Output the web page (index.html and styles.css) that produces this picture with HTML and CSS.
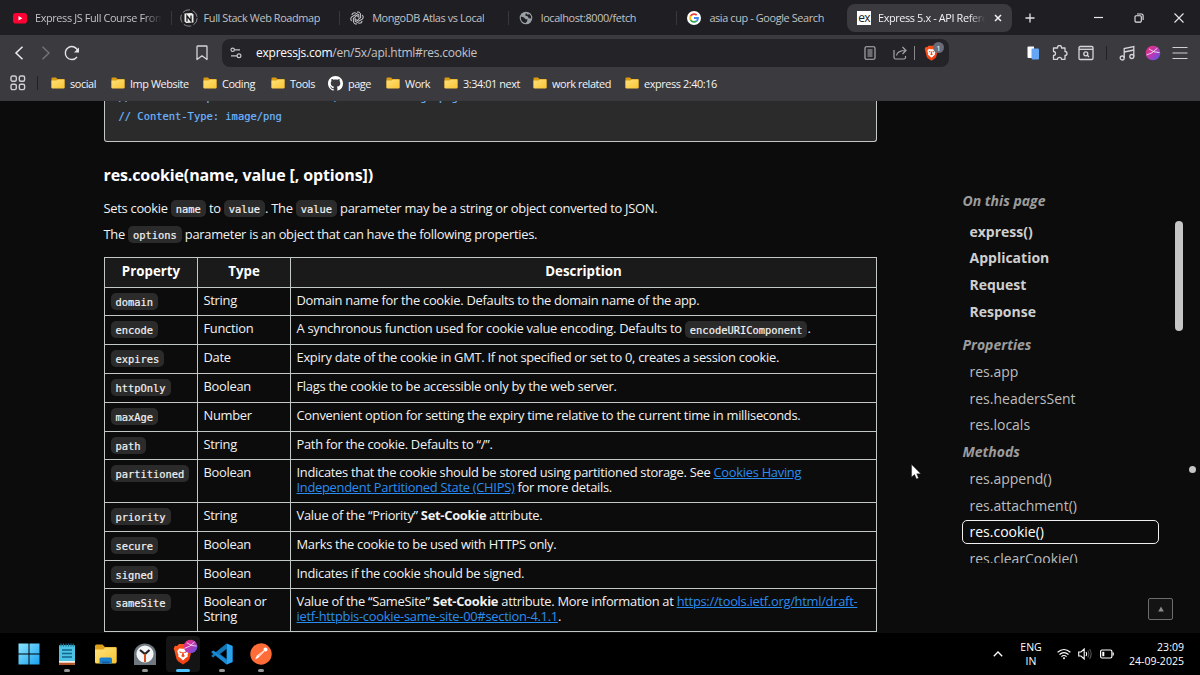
FILE: index.html
```html
<!DOCTYPE html>
<html lang="en">
<head>
<meta charset="utf-8">
<title>Express 5.x - API Reference</title>
<link rel="stylesheet" href="styles.css">
</head>
<body>
<svg width="0" height="0" class="defs">
  <defs>
    <linearGradient id="fold" x1="0" y1="0" x2="1" y2="1"><stop offset="0" stop-color="#ffe27a"/><stop offset="1" stop-color="#f8c434"/></linearGradient>
    <linearGradient id="orb" x1="0" y1="0" x2="1" y2="1"><stop offset="0.2" stop-color="#e0308a"/><stop offset="0.55" stop-color="#b43ab8"/><stop offset="1" stop-color="#4a5cf0"/></linearGradient>
    <linearGradient id="win" x1="0" y1="0" x2="1" y2="1"><stop offset="0" stop-color="#8ae6ff"/><stop offset="1" stop-color="#1aa0f0"/></linearGradient>
    <linearGradient id="lion" x1="0" y1="0" x2="1" y2="1"><stop offset="0" stop-color="#ff5a1f"/><stop offset="1" stop-color="#f03a10"/></linearGradient>
    <symbol id="folder" viewBox="0 0 14 12"><path d="M.5 1.5Q.5.5 1.5.5H5L6.500 2H13Q13.500 2 13.500 2.500V11H.5Z" fill="#d99a14"/><path d="M.5 3.500H5.500L7 2.500H13.500V10.500Q13.500 11.500 12.500 11.500H1.500Q.5 11.500.5 10.500Z" fill="url(#fold)"/></symbol>
    <symbol id="brave" viewBox="0 0 20 22"><path d="M6 1H14L16 3L18 2.800L19.300 5.500L18.500 8L16.500 16Q16 18 10 21.500Q4 18 3.500 16L1.500 8L.7 5.500L2 2.800L4 3Z" fill="url(#lion)"/><path d="M6.500 5.300L8.500 5.700H11.500L13.500 5.300L15.800 8L14.500 12L14.800 13.500L12.300 15.300L10 17.500L7.700 15.300L5.200 13.500L5.500 12L4.200 8Z" fill="#fff"/><path d="M6.300 8.200L9 9L8.500 10L6.800 9.800ZM13.700 8.200L11 9L11.500 10L13.200 9.800ZM9.400 9H10.600L11 12L12 13L10 14.200L8 13L9 12Z" fill="#f4481a"/></symbol>
    <symbol id="orbit" viewBox="0 0 16 16"><circle cx="8" cy="8" r="7.300" fill="url(#orb)"/><path d="M1.500 10Q7 9 12.500 3M4 4Q9 8 14.500 7.500" fill="none" stroke="#fff" stroke-opacity=".85" stroke-width=".9"/></symbol>
  </defs>
</svg>

<header class="tabs">
  <div class="tab">
    <svg class="fav" viewBox="0 0 14 14"><rect x="0" y="2" width="14" height="10.500" rx="2.800" fill="#ff0033"/><path d="M5.500 5V9.500L9.300 7.250Z" fill="#fff"/></svg>
    <span class="title fade">Express JS Full Course From</span>
  </div>
  <div class="tab">
    <svg class="fav wide" viewBox="0 0 18 18"><circle cx="9" cy="9" r="8.200" fill="none" stroke="#8a8a8e" stroke-width="1" stroke-dasharray="8 2.500"/><path d="M4.500 4.500L11.500 4L13.500 5.300V13.500L6.200 14L4.500 12.500Z" fill="#eee"/><path d="M7 12.500V6.800L11 12V6.500" fill="none" stroke="#111" stroke-width="1.300"/></svg>
    <span class="title">Full Stack Web Roadmap</span>
  </div>
  <div class="tab">
    <svg class="fav" viewBox="0 0 14 14" fill="none" stroke="#c9c9cb" stroke-width="1"><path d="M7 1Q9.800.3 10.600 3V7L7.500 9"/><path d="M7 1Q9.800.3 10.600 3V7L7.500 9" transform="rotate(60 7 7)"/><path d="M7 1Q9.800.3 10.600 3V7L7.500 9" transform="rotate(120 7 7)"/><path d="M7 1Q9.800.3 10.600 3V7L7.500 9" transform="rotate(180 7 7)"/><path d="M7 1Q9.800.3 10.600 3V7L7.500 9" transform="rotate(240 7 7)"/><path d="M7 1Q9.800.3 10.600 3V7L7.500 9" transform="rotate(300 7 7)"/></svg>
    <span class="title">MongoDB Atlas vs Local</span>
  </div>
  <div class="tab">
    <svg class="fav" viewBox="0 0 14 14"><circle cx="7" cy="7" r="6.300" fill="#9aa0a6"/><path d="M2 5.500L5 6.500L6.500 8.200H8.500L8 10.500L6.500 12Q2.200 11.500 1.800 7ZM7 2L6.200 4.500L8.500 5.200L9.800 7.200L12.300 7.500Q12.300 4.500 10 2.800L9 4Z" fill="#1f1f23"/></svg>
    <span class="title">localhost:8000/fetch</span>
  </div>
  <div class="tab">
    <svg class="fav" viewBox="0 0 14 14"><circle cx="7" cy="7" r="7" fill="#fff"/><g fill="none" stroke-width="1.800"><path d="M3.600 5A4 4 0 0 1 9.800 4.200" stroke="#ea4335"/><path d="M3.600 5A4 4 0 0 0 3.600 9" stroke="#fbbc05"/><path d="M3.600 9A4 4 0 0 0 9.600 10" stroke="#34a853"/><path d="M9.600 10A4 4 0 0 0 11 7H7" stroke="#4285f4"/></g></svg>
    <span class="title">asia cup - Google Search</span>
  </div>
  <div class="tab active">
    <span class="ex">ex</span>
    <span class="title fade">Express 5.x - API Refere</span>
    <svg class="close" viewBox="0 0 8 8"><path d="M1 1L7 7M7 1L1 7" stroke="#f2f2f4" stroke-width="1.500"/></svg>
  </div>
  <svg class="plus" viewBox="0 0 10 10"><path d="M5 .5V9.500M.5 5H9.500" stroke="#e4e4e6" stroke-width="1.300"/></svg>
  <svg class="wmin" viewBox="0 0 10 10"><path d="M0 4.500H9" stroke="#e8e8ea" stroke-width="1.200"/></svg>
  <svg class="wmax" viewBox="0 0 10 10" fill="none" stroke="#e8e8ea" stroke-width="1.100"><rect x="1" y="2.800" width="6.300" height="6.300" rx="1"/><path d="M3 1H7.500Q9.100 1 9.100 2.500V7"/></svg>
  <svg class="wclose" viewBox="0 0 10 10"><path d="M.5.5L9.500 9.500M9.500.5L.5 9.500" stroke="#e8e8ea" stroke-width="1.100"/></svg>
</header>

<nav class="toolbar">
  <svg class="tb m11" viewBox="0 0 16 16" fill="none" stroke="#eeeef0" stroke-width="1.500"><path d="M11.500 1.800L5 8L11.500 14.200"/></svg>
  <svg class="tb m10" viewBox="0 0 16 16" fill="none" stroke="#77777c" stroke-width="1.300"><path d="M5.500 1.800L12 8L5.500 14.200"/></svg>
  <svg class="tb m11" viewBox="0 0 16 16" fill="none" stroke="#e4e4e6" stroke-width="1.400"><path d="M13 12A6.500 6.500 0 1 1 14 6"/><path d="M15 2.500V7.500H10Z" fill="#e4e4e6" stroke="none"/></svg>
  <svg class="tb m114" viewBox="0 0 16 16" fill="none" stroke="#d6d6d9" stroke-width="1.300"><path d="M3 1.700Q3 1 3.700 1H12.300Q13 1 13 1.700V14.500L8 10.800L3 14.500Z" stroke-linejoin="round"/></svg>
  <div class="address">
    <svg class="tune" viewBox="0 0 12 12" fill="none" stroke="#c6c6ca" stroke-width="1.200"><circle cx="2.700" cy="2.800" r="1.700"/><path d="M4.500 2.800H10M1 8.800H7"/><circle cx="9" cy="8.800" r="1.900"/></svg>
    <span class="url"><b>expressjs.com</b>/en/5x/api.html#res.cookie</span>
    <svg class="reader" viewBox="0 0 12 14" fill="none" stroke="#b5b5b9" stroke-width="1.100"><rect x="1" y=".8" width="10" height="12.400" rx="1.200"/><path d="M3.500 4H8.500M3.500 6H8.500M3.500 8H8.500M3.500 10H8.500"/></svg>
    <svg class="share" viewBox="0 0 14 14" fill="none" stroke="#a4a4a9" stroke-width="1.200"><path d="M1 4V11.500Q1 13 2.500 13H11Q12.500 13 12.500 11.500V10M3.500 9.500Q4.500 4.500 12.500 4.500M9.500 1L13 4.500L9.500 8"/></svg>
    <i class="bar"></i>
    <span class="shield"><svg viewBox="0 0 20 22"><use href="#brave"/></svg><span class="badge">1</span></span>
  </div>
  <svg class="tb m76" viewBox="0 0 16 16"><path d="M2.500 2.500Q2.500 1.500 3.500 1.500H9V13H3.500Q2.500 13 2.500 12Z" fill="#fff"/><rect x="6.500" y="3.500" width="7.500" height="11" rx="1" fill="#66a6f7"/></svg>
  <svg class="tb m11" viewBox="0 0 16 16" fill="none" stroke="#d6d6d9" stroke-width="1.300"><path d="M1.500 3H5.500V2.500A2 2 0 0 1 9.500 2.500V3H13V6.500A2 2 0 0 1 13 10.500V14.300H9.500A2 2 0 0 0 5.500 14.300H1.500V10.500A2 2 0 0 0 1.500 6.500Z" stroke-linejoin="round"/></svg>
  <svg class="tb m10" viewBox="0 0 16 16" fill="none" stroke="#d6d6d9" stroke-width="1.300"><rect x="1" y="1.500" width="14" height="13" rx="1.200"/><path d="M1 4.300H15"/><circle cx="7.800" cy="8.800" r="2"/><path d="M9.300 10.300L11 12"/></svg>
  <i class="tsep"></i>
  <svg class="tb m12" viewBox="0 0 16 16" fill="none" stroke="#d6d6d9" stroke-width="1.300"><circle cx="3.200" cy="13" r="2"/><circle cx="12.800" cy="11.500" r="2"/><path d="M5.200 13V3.500L14.800 1.500V11.500M5.200 7L14.800 5"/></svg>
  <svg class="tb m10" viewBox="0 0 16 16"><use href="#orbit"/></svg>
  <svg class="tb m11" viewBox="0 0 16 16" fill="none" stroke="#d0d0d4" stroke-width="1.200"><path d="M.5 2.500H15.500M.5 8H15.500M.5 13.500H15.500"/></svg>
</nav>

<nav class="bookmarks">
  <svg class="apps" viewBox="0 0 16 16" fill="none" stroke="#d0d0d4" stroke-width="1.400"><rect x="1" y="1" width="5.300" height="5.300" rx="1.500"/><rect x="9.300" y="1" width="5.300" height="5.300" rx="1.500"/><rect x="1" y="9.300" width="5.300" height="5.300" rx="1.500"/><rect x="9.300" y="9.300" width="5.300" height="5.300" rx="1.500"/></svg>
  <i class="bsep"></i>
  <ul>
    <li><svg viewBox="0 0 14 12"><use href="#folder"/></svg>social</li>
    <li><svg viewBox="0 0 14 12"><use href="#folder"/></svg>Imp Website</li>
    <li><svg viewBox="0 0 14 12"><use href="#folder"/></svg>Coding</li>
    <li><svg viewBox="0 0 14 12"><use href="#folder"/></svg>Tools</li>
    <li><svg class="gh" viewBox="0 0 16 16"><path fill="#fff" d="M8 0C3.580 0 0 3.580 0 8c0 3.540 2.290 6.530 5.470 7.590.4.070.55-.17.55-.38 0-.19-.01-.82-.01-1.490-2.010.37-2.530-.49-2.690-.94-.09-.23-.48-.94-.82-1.130-.28-.15-.68-.52-.01-.53.63-.01 1.080.58 1.230.82.72 1.210 1.870.87 2.330.66.07-.52.28-.87.51-1.070-1.780-.2-3.640-.89-3.640-3.950 0-.87.31-1.590.82-2.150-.08-.2-.36-1.020.08-2.120 0 0 .67-.21 2.200.82.64-.18 1.320-.27 2-.27s1.360.09 2 .27c1.530-1.040 2.200-.82 2.200-.82.44 1.100.16 1.920.08 2.120.51.56.82 1.270.82 2.150 0 3.070-1.870 3.750-3.650 3.950.29.25.54.73.54 1.480 0 1.070-.01 1.930-.01 2.200 0 .21.15.46.55.38A8.010 8.010 0 0 0 16 8c0-4.420-3.580-8-8-8Z"/></svg>page</li>
    <li><svg viewBox="0 0 14 12"><use href="#folder"/></svg>Work</li>
    <li><svg viewBox="0 0 14 12"><use href="#folder"/></svg>3:34:01 next</li>
    <li><svg viewBox="0 0 14 12"><use href="#folder"/></svg>work related</li>
    <li><svg viewBox="0 0 14 12"><use href="#folder"/></svg>express 2:40:16</li>
  </ul>
</nav>

<main>
  <article>
    <div class="pre-wrap"><pre>// Content-Disposition: attachment; filename="logo.png"
// Content-Type: image/png</pre></div>
    <h3>res.cookie(name, value [, options])</h3>
    <p>Sets cookie <code>name</code> to <code>value</code>. The <code>value</code> parameter may be a string or object converted to JSON.</p>
    <p>The <code>options</code> parameter is an object that can have the following properties.</p>
    <table>
      <colgroup><col class="c1"><col class="c1"><col></colgroup>
      <tr class="h30"><th>Property</th><th>Type</th><th>Description</th></tr>
      <tr class="h28"><td><code>domain</code></td><td>String</td><td>Domain name for the cookie. Defaults to the domain name of the app.</td></tr>
      <tr><td><code>encode</code></td><td>Function</td><td>A synchronous function used for cookie value encoding. Defaults to <code>encodeURIComponent</code>.</td></tr>
      <tr><td><code>expires</code></td><td>Date</td><td>Expiry date of the cookie in GMT. If not specified or set to 0, creates a session cookie.</td></tr>
      <tr><td><code>httpOnly</code></td><td>Boolean</td><td>Flags the cookie to be accessible only by the web server.</td></tr>
      <tr><td><code>maxAge</code></td><td>Number</td><td>Convenient option for setting the expiry time relative to the current time in milliseconds.</td></tr>
      <tr class="h28"><td><code>path</code></td><td>String</td><td>Path for the cookie. Defaults to “/”.</td></tr>
      <tr class="h43"><td><code>partitioned</code></td><td>Boolean</td><td>Indicates that the cookie should be stored using partitioned storage. See <a>Cookies Having<br>Independent Partitioned State (CHIPS)</a> for more details.</td></tr>
      <tr><td><code>priority</code></td><td>String</td><td>Value of the “Priority” <b>Set-Cookie</b> attribute.</td></tr>
      <tr><td><code>secure</code></td><td>Boolean</td><td>Marks the cookie to be used with HTTPS only.</td></tr>
      <tr class="h28"><td><code>signed</code></td><td>Boolean</td><td>Indicates if the cookie should be signed.</td></tr>
      <tr class="h43"><td><code>sameSite</code></td><td>Boolean or<br>String</td><td>Value of the “SameSite” <b>Set-Cookie</b> attribute. More information at <a>https://tools.ietf.org/html/draft-<br>ietf-httpbis-cookie-same-site-00#section-4.1.1</a>.</td></tr>
    </table>
  </article>

  <aside>
    <div class="toc">
      <h4 class="first">On this page</h4>
      <a class="top">express()</a>
      <a class="top">Application</a>
      <a class="top">Request</a>
      <a class="top">Response</a>
      <h4 class="props">Properties</h4>
      <a>res.app</a>
      <a>res.headersSent</a>
      <a>res.locals</a>
      <h4>Methods</h4>
      <a>res.append()</a>
      <a>res.attachment()</a>
      <a class="current">res.cookie()</a>
      <a>res.clearCookie()</a>
    </div>
    <div class="totop"><svg viewBox="0 0 6 6"><path d="M3 .5L5.800 5.500H.2Z" fill="#8c8c8c"/></svg></div>
  </aside>
  <i class="thumb"></i>
  <i class="dot"></i>
  <svg class="cursor" viewBox="0 0 10 16"><path d="M.6.600V13L3.500 10.500L5.500 15L7.500 14L5.700 9.800H9.700Z" fill="#fff" stroke="#222" stroke-width=".4"/></svg>
</main>

<footer>
  <div class="pinned">
    <span class="app"><svg viewBox="0 0 22 22"><path d="M.5.5H10.500V10.500H.5ZM11.500.5H21.500V10.500H11.500ZM.5 11.500H10.500V21.500H.5ZM11.500 11.500H21.500V21.500H11.500Z" fill="url(#win)"/></svg></span>
    <span class="app run"><svg viewBox="0 0 22 22"><rect x="3" y="2" width="16" height="19" rx="1" fill="#4cc3e4"/><path d="M3 18H19V20.500Q19 22 17.500 22H4.500Q3 22 3 20.500Z" fill="#f4f0ea"/><path d="M3 19.700H19V20.500Q19 22 17.500 22H4.500Q3 22 3 20.500Z" fill="#b5562a"/><path d="M5 .5V3.500M7.500.5V3.500M10 .5V3.500M12.500.5V3.500M15 .5V3.500M17.300.5V3.500" stroke="#176f93" stroke-width="1.200"/><path d="M6 7H16M6 10.500H16M6 14H16" stroke="#11658a" stroke-width="1.300"/></svg></span>
    <span class="app"><svg viewBox="0 0 22 22"><path d="M0 3Q0 1.500 1.500 1.500H7.500L10 4H20.500Q21.500 4 21.500 5V19H0Z" fill="#dda11c"/><path d="M0 6.500H8L10.500 4.500H21.500V19Q21.500 20.500 20 20.500H1.500Q0 20.500 0 19Z" fill="url(#fold)"/><path d="M4.500 20.500V16Q4.500 14.500 6 14.500H15.500Q17 14.500 17 16V20.500Z" fill="#1b7fcf"/><path d="M7 20.500V18.500H14.500V20.500Z" fill="#0f5ea6"/></svg></span>
    <span class="app run"><svg viewBox="0 0 22 22"><path d="M0 22V11A11 10.500 0 0 1 22 11V22Z" fill="#6f7880"/><circle cx="11" cy="11" r="8.600" fill="#f2f4f5"/><path d="M6 7L11 11L15.500 7" fill="none" stroke="#222" stroke-width="2.200"/><path d="M11 11V19" stroke="#d5531d" stroke-width="2"/></svg></span>
    <span class="app run on"><svg viewBox="0 0 20 22"><use href="#brave"/></svg><svg class="mini" viewBox="0 0 16 16"><use href="#orbit"/></svg></span>
    <span class="app run"><svg viewBox="0 0 22 22"><path d="M15.500.5L21.500 3V19L15.500 21.500L5 11.500L2.500 14.500L.5 13.500V12.500L15.500.5Z" fill="#1177bb"/><path d="M.5 8.500L2.500 7.500L16.500 18V21.500L15 21L.5 9.500Z" fill="#1b8ad6"/><path d="M15.500 6V16L9 11Z" fill="#000"/><path d="M16 .7L21.500 3V19L16 21.300Z" fill="#28a3ee"/></svg></span>
    <span class="app run"><svg viewBox="0 0 22 22"><circle cx="11" cy="11" r="10.700" fill="#ff6c37"/><path d="M5 16.500L7 12.500L13.500 7.500L14.500 8.500L8 15Z" fill="#fff"/><circle cx="15.500" cy="6.500" r="2" fill="#fff"/><path d="M8.500 13L13 8.500" stroke="#ff6c37" stroke-width=".6"/></svg></span>
  </div>
  <svg class="chev" viewBox="0 0 10 6"><path d="M.8 5.200L5 1L9.200 5.200" fill="none" stroke="#fff" stroke-width="1.300"/></svg>
  <div class="lang">ENG<br>IN</div>
  <svg class="wifi" viewBox="0 0 14 12" fill="none" stroke="#fff" stroke-width="1.200"><path d="M.6 4.300Q7-1.300 13.400 4.300M2.500 6.500Q7 2.600 11.500 6.500M4.400 8.600Q7 6.400 9.600 8.600"/><circle cx="7" cy="10.300" r="1" fill="#fff" stroke="none"/></svg>
  <svg class="vol" viewBox="0 0 14 12" fill="none" stroke="#fff" stroke-width="1.100"><path d="M.7 4H3L6.200 1V11L3 8H.7ZM8 4Q9.300 6 8 8"/><path d="M9.800 2.500Q12 6 9.800 9.500M11.600 1Q14.700 6 11.600 11" stroke="#555"/></svg>
  <svg class="bat" viewBox="0 0 14 10" fill="none" stroke="#fff" stroke-width="1.200"><rect x=".6" y="1" width="11.300" height="8" rx="1.500"/><path d="M13.200 3.500V6.500"/><rect x="2.300" y="2.800" width="2" height="4.400" fill="#fff" stroke="none"/></svg>
  <div class="clock">23:09<br>24-09-2025</div>
</footer>
</body>
</html>
```
FILE: styles.css
```css
* { box-sizing: border-box; }
body {
  margin: 0;
  width: 1200px;
  height: 675px;
  overflow: hidden;
  display: flex;
  flex-direction: column;
  background: #0c0c0c;
  color: #f2f2f2;
  font-family: "Open Sans", sans-serif;
}
svg { display: block; flex: none; }
.defs { position: absolute; }

/* tab strip */
.tabs { height: 35px; flex: none; display: flex; align-items: center; background: #1f1f23; padding-left: 3px; }
.tab {
  width: 168.6px; height: 28px; flex: none; display: flex; align-items: center; padding-left: 10px;
  font-size: 10.900px; letter-spacing: -0.38px; color: #c2c2c5; white-space: nowrap; position: relative;
}
.tab + .tab:not(.active)::before { content: ""; position: absolute; left: -1px; top: 7px; width: 1px; height: 14px; background: #39393d; }
.fav { width: 14px; height: 14px; margin-right: 8px; }
.fav.wide { width: 18px; height: 18px; margin: 0 6px 0 -2px; }
.title { overflow: hidden; position: relative; top: -0.5px; }
.fade { width: 127px; -webkit-mask-image: linear-gradient(90deg, #000 85%, transparent); mask-image: linear-gradient(90deg, #000 85%, transparent); }
.tab.active { width: 165px; margin-left: 1px; background: #3b3b3f; border-radius: 8px; color: #f2f2f4; }
.tab.active .fade { width: 107px; }
.ex { width: 14px; height: 14px; margin-right: 7px; background: #fff; color: #222; font-size: 12px; line-height: 13px; letter-spacing: -0.8px; text-align: center; }
.close { width: 8px; height: 8px; margin-left: 9px; }
.plus { width: 10px; height: 10px; margin-left: 13px; }
.wmin { width: 10px; height: 10px; margin-left: 59px; }
.wmax { width: 10px; height: 10px; margin-left: 30px; }
.wclose { width: 10px; height: 10px; margin-left: 30px; }

/* toolbar */
.toolbar { height: 35px; flex: none; display: flex; align-items: center; background: #3b3b3f; }
.tb { width: 16px; height: 16px; }
.m10 { margin-left: 10px; }
.m11 { margin-left: 11px; }
.m12 { margin-left: 12px; }
.m76 { margin-left: 76px; }
.m114 { margin-left: 114px; }
.address { width: 727px; height: 28px; margin-left: 12px; border-radius: 8px; background: #242428; display: flex; align-items: center; padding-left: 8px; }
.tune { width: 12px; height: 12px; }
.url { margin-left: 14px; font-size: 12px; letter-spacing: -0.24px; color: #c3c3c8; flex: 1; }
.url b { font-weight: 400; color: #fff; }
.reader { width: 12px; height: 14px; margin-right: 17px; }
.share { width: 14px; height: 14px; margin-right: 7px; }
.bar { width: 1px; height: 14px; background: #88888c; margin-right: 9px; }
.shield { position: relative; width: 25px; height: 16px; }
.shield svg { width: 15px; height: 16px; }
.badge { position: absolute; left: 9px; top: -3px; width: 11px; height: 11px; border-radius: 50%; background: #696b78; color: #fff; font-size: 8px; line-height: 11px; text-align: center; }
.tsep { width: 1px; height: 14px; margin: 0 0 0 12px; background: #222226; }

/* bookmarks bar */
.bookmarks { height: 30px; flex: none; display: flex; align-items: center; background: #3b3b3f; padding: 0 0 4px 10px; }
.apps { width: 16px; height: 16px; }
.bsep { width: 1px; height: 14px; background: #222226; margin: 0 13px 0 11px; }
.bookmarks ul { list-style: none; margin: 0; padding: 0; display: grid; grid-template-columns: 60px 92px 68px 57px 58px 58px 89px 92px 100px; font-size: 10.900px; letter-spacing: -0.42px; font-weight: 500; white-space: nowrap; color: #f4f4f6; }
.bookmarks li { display: flex; align-items: center; gap: 5px; }
.bookmarks li svg { width: 14px; height: 12px; }
.bookmarks li svg.gh { width: 15px; height: 15px; }

/* page */
main { flex: 1; min-height: 0; display: flex; position: relative; overflow: hidden; border-top: 1px solid #39393d; }
article { width: 773px; margin-left: 104px; flex: none; }
.pre-wrap { height: 41px; border: 1px solid #c2c8c8; border-top: 0; border-radius: 0 0 3px 3px; background: #2b2b2b; overflow: hidden; }
pre { margin: -13px 0 0 13.500px; font: 10.45px/18.5px "DejaVu Sans Mono", monospace; color: #6cb6ff; -webkit-text-stroke: 0.2px #6cb6ff; }
h3 { margin: 21px 0 0; font-size: 16px; letter-spacing: -0.12px; line-height: 24px; font-weight: 700; color: #fff; }
h3, p { text-indent: -0.5px; }
p { margin: 0; font-size: 12.900px; letter-spacing: -0.28px; line-height: 26px; white-space: nowrap; }
h3 + p { margin-top: 8px; }
code { display: inline-block; height: 17px; padding: 0 5px; border-radius: 5px; background: #2b2b2b; font: 10.4px/18px "DejaVu Sans Mono", monospace; letter-spacing: 0; text-indent: 0; -webkit-text-stroke: 0.2px #f2f2f2; }
table { width: 773px; margin-top: 10px; table-layout: fixed; border-collapse: collapse; font-size: 12.900px; letter-spacing: -0.28px; line-height: 15px; }
.c1 { width: 93px; }
tr { height: 29px; }
.h28 { height: 28px; }
.h30 { height: 30px; }
.h43 { height: 43px; }
th, td { border: 1px solid #c2c8c8; padding: 0 5.500px; white-space: nowrap; }
th { background: #1a1a1a; color: #fff; text-align: center; font-size: 13.300px; letter-spacing: 0; padding-bottom: 2px; }
td { vertical-align: top; padding-top: 5px; text-align: left; }
td code { margin: -1px 0; position: relative; top: 0.5px; }
a { color: #2a8cf0; text-decoration: underline; }

/* table of contents */
aside { width: 200px; margin-left: 85px; }
.toc { height: 462px; padding-top: 86px; overflow: hidden; font-size: 14px; }
.toc h4, .toc a { display: flex; align-items: center; height: 26.750px; margin: 0; }
.toc h4 { padding-left: 0.5px; font-size: 14px; font-style: italic; color: #9c9c9c; }
.toc .first { margin-bottom: 4px; }
.toc .props { margin-top: 6.500px; }
.toc a { padding-left: 7.500px; color: #bdbdbd; text-decoration: none; }
.toc .top { font-weight: 700; color: #cfcfcf; }
.toc .current { height: 24px; width: 197px; margin: 1px 0 1.750px; padding-left: 6.500px; border: 1px solid #f0f0f0; border-radius: 5px; color: #fff; }
.totop { width: 25px; height: 22px; margin: 35px 0 0 186px; border: 1px solid #6c6c6c; border-radius: 2px; background: #141414; display: flex; align-items: center; justify-content: center; }
.totop svg { width: 6px; height: 6px; }
.thumb { position: absolute; left: 1175px; top: 120px; width: 8px; height: 110px; border-radius: 4px; background: #c6c6c6; }
.dot { position: absolute; left: 1189px; top: 365px; width: 7px; height: 7px; border-radius: 50%; background: #c6c6c6; }
.cursor { position: absolute; left: 911px; top: 363px; width: 10px; height: 16px; }

/* taskbar */
footer { height: 42px; flex: none; display: flex; align-items: center; background: #000; color: #fff; font-size: 10.500px; letter-spacing: 0.03px; line-height: 14px; }
.pinned { display: flex; gap: 4.700px; padding-left: 11.500px; width: 993px; }
.app { width: 34px; height: 36px; position: relative; display: flex; justify-content: center; align-items: center; padding-bottom: 1px; }
.app svg { width: 22px; height: 22px; }
.run::after { content: ""; position: absolute; bottom: 0; left: 14px; width: 6px; height: 3px; border-radius: 2px; background: #969696; }
.on { background: #141414; border-radius: 4px; }
.on::after { left: 10px; width: 14px; background: #4cc2ff; }
.app .mini { position: absolute; left: 17px; top: 3px; width: 15px; height: 15px; }
.chev { width: 10px; height: 6px; }
.lang { width: 38px; margin-left: 9px; text-align: center; }
.wifi { width: 14px; height: 12px; margin-left: 7px; }
.vol { width: 14px; height: 12px; margin-left: 7px; }
.bat { width: 14px; height: 10px; margin-left: 8px; }
.clock { margin-left: auto; padding-right: 16px; text-align: right; }
```
